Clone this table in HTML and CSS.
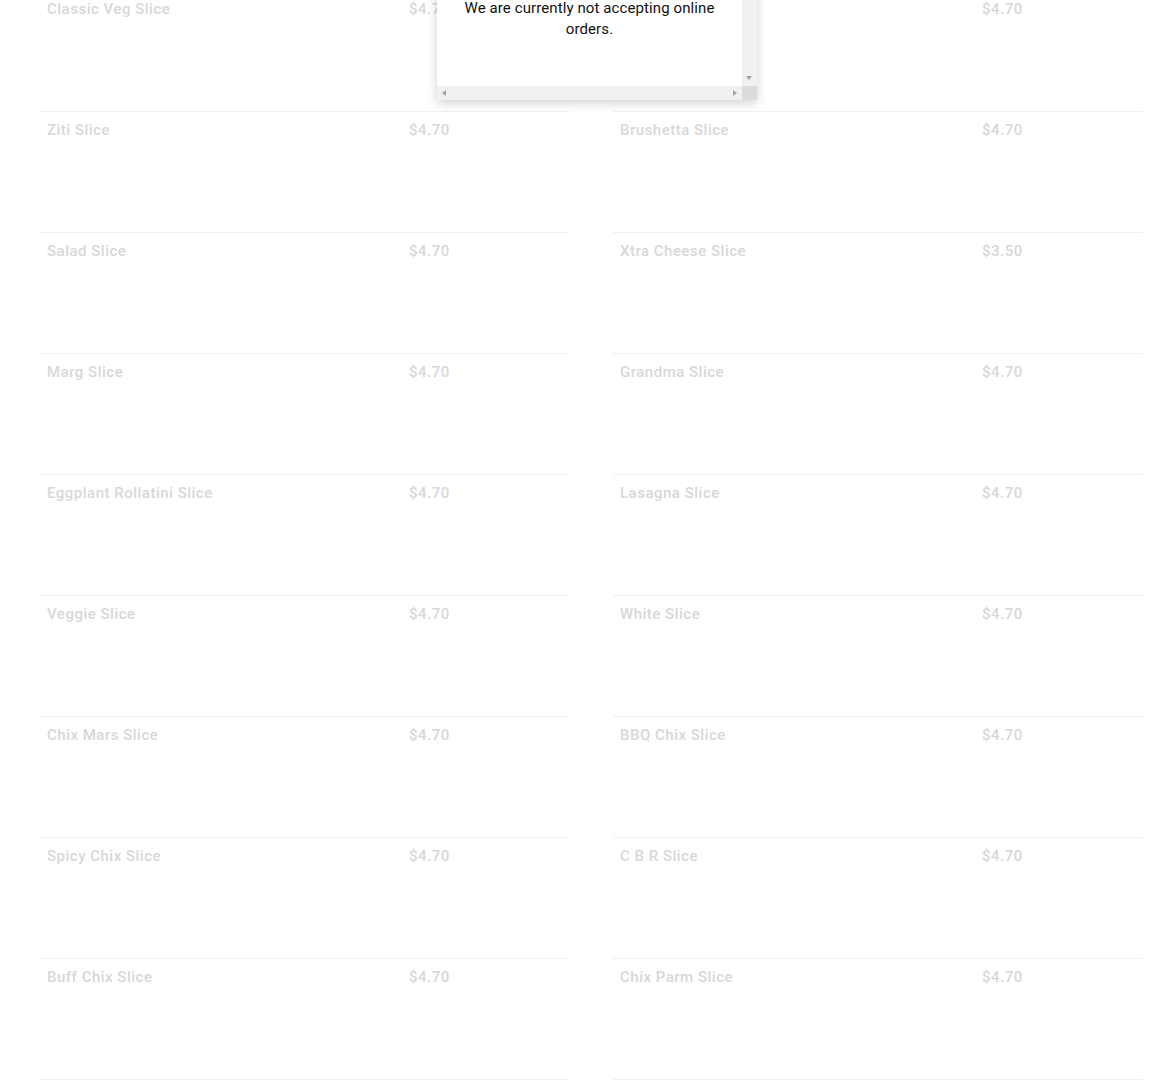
FILE: index.html
```html
<!DOCTYPE html>
<html lang="en">
<head>
    <meta charset="UTF-8">
    <meta name="viewport" content="width=device-width, initial-scale=1.0">
    <title>Slices</title>
    <link rel="stylesheet" href="styles.css">
</head>
<body>
    <div class="menu">
        <ul class="column">
            <li class="item"><span class="name">Classic Veg Slice</span><span class="price">$4.70</span></li>
            <li class="item"><span class="name">Ziti Slice</span><span class="price">$4.70</span></li>
            <li class="item"><span class="name">Salad Slice</span><span class="price">$4.70</span></li>
            <li class="item"><span class="name">Marg Slice</span><span class="price">$4.70</span></li>
            <li class="item"><span class="name">Eggplant Rollatini Slice</span><span class="price">$4.70</span></li>
            <li class="item"><span class="name">Veggie Slice</span><span class="price">$4.70</span></li>
            <li class="item"><span class="name">Chix Mars Slice</span><span class="price">$4.70</span></li>
            <li class="item"><span class="name">Spicy Chix Slice</span><span class="price">$4.70</span></li>
            <li class="item"><span class="name">Buff Chix Slice</span><span class="price">$4.70</span></li>
        </ul>
        <ul class="column">
            <!-- name of this one sits under the notice -->
            <li class="item"><span class="name"></span><span class="price">$4.70</span></li>
            <li class="item"><span class="name">Brushetta Slice</span><span class="price">$4.70</span></li>
            <li class="item"><span class="name">Xtra Cheese Slice</span><span class="price">$3.50</span></li>
            <li class="item"><span class="name">Grandma Slice</span><span class="price">$4.70</span></li>
            <li class="item"><span class="name">Lasagna Slice</span><span class="price">$4.70</span></li>
            <li class="item"><span class="name">White Slice</span><span class="price">$4.70</span></li>
            <li class="item"><span class="name">BBQ Chix Slice</span><span class="price">$4.70</span></li>
            <li class="item"><span class="name">C B R Slice</span><span class="price">$4.70</span></li>
            <li class="item"><span class="name">Chix Parm Slice</span><span class="price">$4.70</span></li>
        </ul>
    </div>

    <!-- closed notice, scrolled partly out of view -->
    <div class="notice">
        <div class="notice-body">
            <p>We are currently not accepting online orders.</p>
        </div>
        <div class="vbar"><span class="arrow down"></span></div>
        <div class="hbar">
            <span class="arrow left"></span>
            <span class="arrow right"></span>
        </div>
        <div class="corner"></div>
    </div>
</body>
</html>
```

FILE: styles.css
```css
body {
    font-family: Roboto, "Liberation Sans", sans-serif;
    background-color: #fff;
    margin: 0;
    overflow: hidden;
}
.menu {
    display: grid;
    grid-template-columns: 529px 530px;
    column-gap: 44px;
    padding: 0 31px 0 40px;
    margin-top: -9px;
}
.column {
    list-style: none;
    margin: 0;
    padding: 0;
}
.item {
    display: grid;
    grid-template-columns: 362px 1fr;
    height: 113px;
    padding: 7px 7px 0;
    border-bottom: 1px solid #f1f1f1;
    font-size: 15px;
    font-weight: 500;
    line-height: 22px;
    letter-spacing: 0.5px;
    color: #d8d8d8;
}
.notice {
    position: absolute;
    top: -40px;
    left: 437px;
    width: 320px;
    height: 140px;
    background: #fff;
    box-shadow: 0 3px 10px rgba(0, 0, 0, 0.18);
}
.notice-body {
    width: 305px;
    height: 126px;
    padding-top: 38px;
    box-sizing: border-box;
    text-align: center;
}
.notice-body p {
    margin: 0;
    padding: 0 18px;
    font-size: 15px;
    line-height: 21px;
    letter-spacing: 0.1px;
    color: #111;
}
.vbar {
    position: absolute;
    top: 0;
    right: 0;
    width: 15px;
    height: 126px;
    background: #f1f1f1;
}
.hbar {
    position: absolute;
    left: 0;
    bottom: 0;
    width: 305px;
    height: 14px;
    background: #f1f1f1;
}
.corner {
    position: absolute;
    right: 0;
    bottom: 0;
    width: 15px;
    height: 14px;
    background: #dcdcdc;
}
.arrow {
    position: absolute;
    width: 0;
    height: 0;
    border: 3px solid transparent;
}
.arrow.down {
    left: 4px;
    bottom: 6px;
    border-top: 4px solid #a3a3a3;
    border-bottom: 0;
}
.arrow.left {
    left: 5px;
    top: 4px;
    border-right: 4px solid #a3a3a3;
    border-left: 0;
}
.arrow.right {
    right: 5px;
    top: 4px;
    border-left: 4px solid #a3a3a3;
    border-right: 0;
}
```
